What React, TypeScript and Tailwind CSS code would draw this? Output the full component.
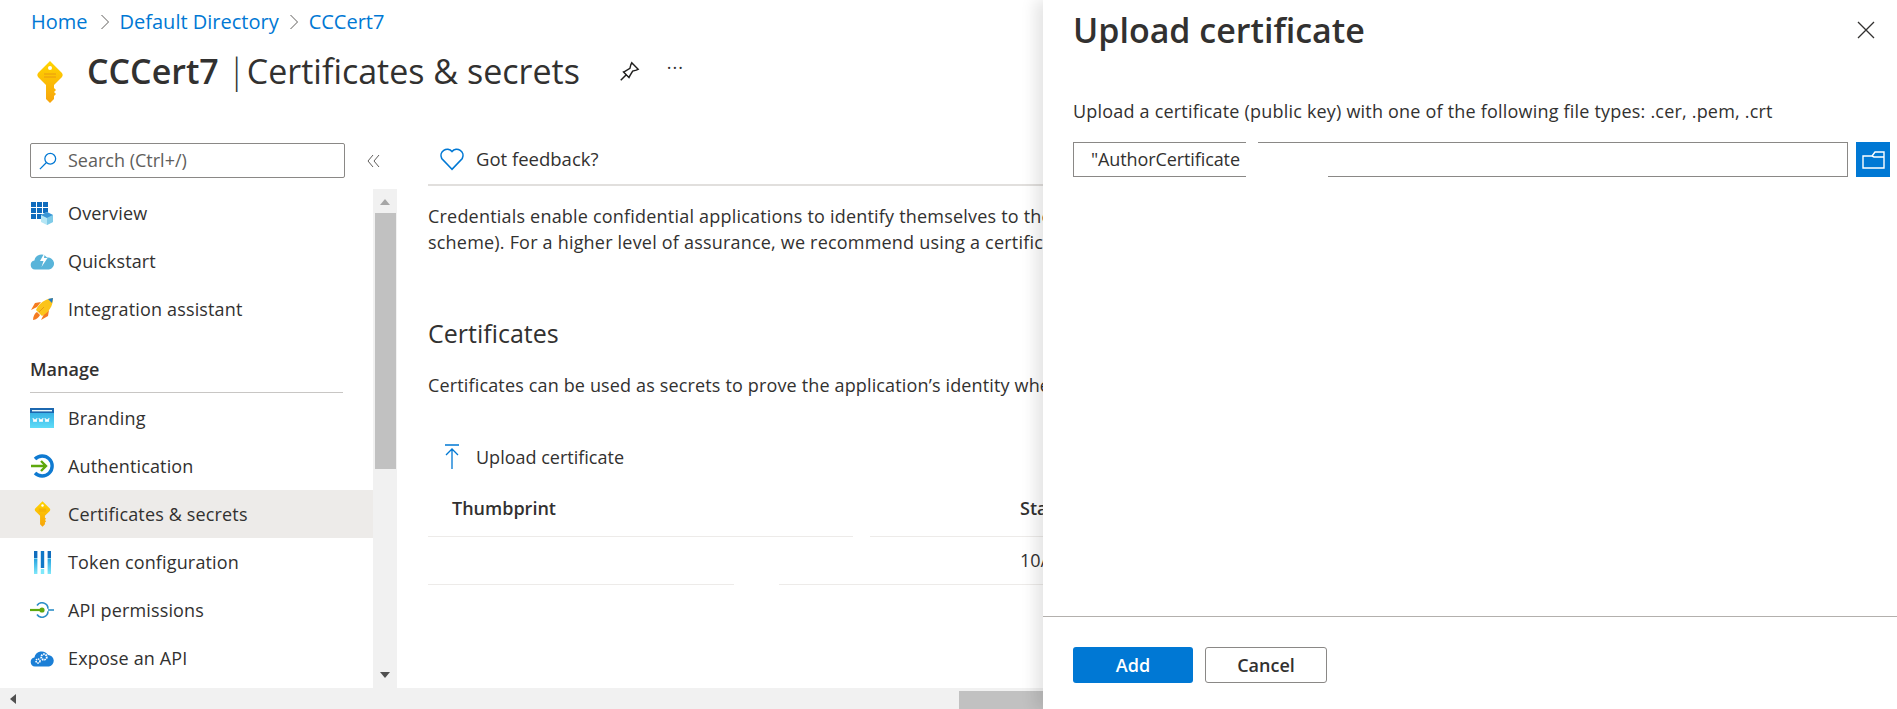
import { ReactNode } from "react";

const KeyIcon = ({ className }: { className: string }) => (
  <svg viewBox="0 0 28 42" className={className}>
    <defs>
      <linearGradient id="keyFill" x1="0" y1="0" x2="0" y2="1">
        <stop offset="0" stopColor="#ffd400" />
        <stop offset="1" stopColor="#f7a40c" />
      </linearGradient>
    </defs>
    <path d="M14 0 L26 12 Q27.5 14 26 16 L18 24 V27 L20 29 L18 31 L20 33 L18 35 V38 L14 42 L10 38 V24 L2 16 Q.5 14 2 12 Z" fill="url(#keyFill)" />
    <circle cx="14" cy="7" r="2" fill="#fff" />
    <path d="M8 13h12M8 16h12" stroke="#e89a10" strokeWidth="1" />
  </svg>
);

const OverviewIcon = () => (
  <svg viewBox="0 0 24 24" className="w-6 h-6">
    <path d="M1 1h5v5H1zM7 1h5v5H7zM13 1h5v5h-5zM1 7h5v5H1zM7 7h5v5H7zM13 7h5v5h-5zM1 13h5v5H1zM7 13h5v5H7z" fill="#0f6cbd" />
    <path d="M17 11l6 3v7l-6 3-6-3v-7z" fill="#b5e6f5" />
    <path d="M17 17l6-3v7l-6 3z" fill="#7fcbe8" />
    <path d="M17 11l6 3-6 3-6-3z" fill="#3a96d6" />
  </svg>
);

const QuickstartIcon = () => (
  <svg viewBox="0 0 24 18" className="w-6 h-[18px]">
    <path d="M5 17.5a4.6 4.6 0 0 1-.6-9.1A7 7 0 0 1 17 5.6a5.8 5.8 0 0 1 2 11.9z" fill="#59b4d9" />
    <path d="M15 0L10 9h3.5l-2 6 6-9H14z" fill="#fff" />
  </svg>
);

const RocketIcon = () => (
  <svg viewBox="0 0 24 24" className="w-6 h-6">
    <path d="M7 10L1 13l4-7 6-1zM14 17l-3 6 7-4 1-6z" fill="#f47b20" />
    <path d="M6 13C9 6 15 2 23 1c0 8-4 14-11 18z" fill="#fcc419" />
    <path d="M18 2l5-1-1 5z" fill="#1f78c8" />
    <path d="M3 23c0-4 2-7 4-8l3 3c-1 2-4 5-7 5z" fill="#f47b20" />
    <path d="M9 15l5-5" stroke="#e89a10" strokeWidth="1" />
  </svg>
);

const BrandingIcon = () => (
  <svg viewBox="0 0 24 20" className="w-6 h-5">
    <defs>
      <linearGradient id="wwwFill" x1="0" y1="0" x2="0" y2="1">
        <stop offset="0" stopColor="#2aa5e0" />
        <stop offset="1" stopColor="#5fdcf7" />
      </linearGradient>
    </defs>
    <rect width="24" height="20" fill="url(#wwwFill)" />
    <rect width="24" height="5" fill="#1c68b0" />
    <rect x="2" y="2" width="20" height="1.4" fill="#e6f5fb" />
    <path d="M3 10l1 4 1-3 1 3 1-4M9 10l1 4 1-3 1 3 1-4M15 10l1 4 1-3 1 3 1-4" fill="none" stroke="#fff" strokeWidth="1" />
  </svg>
);

const AuthIcon = () => (
  <svg viewBox="0 0 24 24" className="w-6 h-6">
    <path d="M5 5A10 10 0 1 1 5 19" fill="none" stroke="#0f7ad1" strokeWidth="3.4" />
    <path d="M1 12h15M11 7l5 5-5 5" fill="none" stroke="#5ea80d" strokeWidth="2.4" />
  </svg>
);

const TokenIcon = () => (
  <svg viewBox="0 0 17 23" className="w-[17px] h-[23px]">
    <defs>
      <linearGradient id="tokenFill" x1="0" y1="0" x2="0" y2="1">
        <stop offset="0" stopColor="#0f6cbd" />
        <stop offset="0.3" stopColor="#0f6cbd" />
        <stop offset="0.32" stopColor="#8fdcf5" />
        <stop offset="0.36" stopColor="#2aa5e0" />
        <stop offset="1" stopColor="#7fe8fa" />
      </linearGradient>
    </defs>
    <rect x="0" y="0" width="3.4" height="23" fill="url(#tokenFill)" />
    <rect x="6.8" y="0" width="3.4" height="17" fill="#0f78c8" />
    <rect x="6.8" y="18" width="3.4" height="5" fill="#7fe8fa" />
    <rect x="13.6" y="0" width="3.4" height="23" fill="url(#tokenFill)" />
  </svg>
);

const ApiIcon = () => (
  <svg viewBox="0 0 24 16" className="w-6 h-4">
    <path d="M7 3.5a6 6 0 0 1 11 3.2M7 12.5a6 6 0 0 0 11-3.2" fill="none" stroke="#2d8fc7" strokeWidth="1.6" />
    <path d="M18 8h6" stroke="#2d8fc7" strokeWidth="1.6" />
    <path d="M0 8h11" stroke="#5ea80d" strokeWidth="2.2" />
    <circle cx="12" cy="8" r="2.6" fill="#5ea80d" />
  </svg>
);

const ExposeIcon = () => (
  <svg viewBox="0 0 24 18" className="w-6 h-[18px]">
    <path d="M5 17.5a4.6 4.6 0 0 1-.6-9.1A7.4 7.4 0 0 1 18 6a5.8 5.8 0 0 1 1 11.5z" fill="#1b7fd6" />
    <circle cx="8" cy="12" r="2" fill="none" stroke="#fff" strokeWidth="1.6" strokeDasharray="1.4 .7" />
    <circle cx="14" cy="8" r="2.8" fill="none" stroke="#fff" strokeWidth="1.8" strokeDasharray="1.6 .8" />
  </svg>
);

const NavItem = ({ icon, label, active }: { icon: ReactNode; label: string; active?: boolean }) => (
  <div className={`flex items-center h-12 pl-[30px] text-[18px] tracking-[0.15px] ${active ? "bg-[#edebe9]" : ""}`}>
    <span className="w-6 flex justify-center shrink-0">{icon}</span>
    <span className="ml-[14px] whitespace-nowrap">{label}</span>
  </div>
);

const Chevron = () => (
  <svg viewBox="0 0 10 18" className="w-[10px] h-[18px] mx-[10px]">
    <path d="M1.5 2l7 7-7 7" fill="none" stroke="#605e5c" strokeWidth="1" />
  </svg>
);

export default function App() {
  return (
    <div className="relative w-[1897px] h-[709px] overflow-hidden bg-white text-[#323130] font-['Open_Sans',sans-serif]">
      <div className="flex flex-col w-full h-full">
        <div className="flex items-center h-11 pl-[31px] text-[20px] text-[#0078d4]">
          <span className="mr-[2px]">Home</span>
          <Chevron />
          <span>Default Directory</span>
          <Chevron />
          <span>CCCert7</span>
        </div>

        <div className="flex items-center h-[55px] pl-[36px]">
          <KeyIcon className="w-[28px] h-[42px] mt-[20px]" />
          <div className="flex items-center ml-[23px] text-[34px] leading-[46px] mb-[2px] whitespace-nowrap">
            <span className="font-semibold">CCCert7</span>
            <span className="w-[20px] ml-[8px] text-center font-light">|</span>
            <span>Certificates &amp; secrets</span>
          </div>
          <svg viewBox="0 0 24 24" className="w-[22px] h-[22px] ml-[38px]">
            <path d="M15 2l7 7-2 1-4 1-3 5-1 2-3-3-6 6 6-6-3-3 2-1 5-3 1-4z" fill="none" stroke="#201f1e" strokeWidth="1.6" />
          </svg>
          <span className="ml-[27px] mb-2 text-[18px] tracking-[1px]">···</span>
        </div>

        <div className="flex flex-1 min-h-0 mt-[44px]">
          <aside className="w-[397px] shrink-0 flex flex-col">
            <div className="flex items-center h-[35px] pl-[30px]">
              <div className="flex items-center w-[315px] h-[35px] border border-[#8a8886] rounded-[2px] pl-[8px]">
                <svg viewBox="0 0 20 20" className="w-[18px] h-[18px]">
                  <circle cx="12.5" cy="7.5" r="6" fill="none" stroke="#0078d4" strokeWidth="1.4" />
                  <path d="M8 12l-7 7" stroke="#0078d4" strokeWidth="1.4" />
                </svg>
                <span className="ml-[11px] text-[18px] text-[#605e5c]">Search (Ctrl+/)</span>
              </div>
              <svg viewBox="0 0 14 14" className="w-[14px] h-[14px] ml-[22px]">
                <path d="M6 1L1 7l5 6M12 1L7 7l5 6" fill="none" stroke="#605e5c" strokeWidth="1" />
              </svg>
            </div>
            <div className="flex flex-1 min-h-0 mt-[11px]">
              <div className="w-[373px] shrink-0 overflow-hidden">
                <NavItem icon={<OverviewIcon />} label="Overview" />
                <NavItem icon={<QuickstartIcon />} label="Quickstart" />
                <NavItem icon={<RocketIcon />} label="Integration assistant" />
                <div className="mx-[30px] h-[60px] flex items-end border-b border-[#c8c6c4] pb-[9px] mb-[1px] text-[18px] font-semibold">Manage</div>
                <NavItem icon={<BrandingIcon />} label="Branding" />
                <NavItem icon={<AuthIcon />} label="Authentication" />
                <NavItem icon={<KeyIcon className="w-[17px] h-[26px]" />} label="Certificates & secrets" active />
                <NavItem icon={<TokenIcon />} label="Token configuration" />
                <NavItem icon={<ApiIcon />} label="API permissions" />
                <NavItem icon={<ExposeIcon />} label="Expose an API" />
              </div>
              <div className="w-[24px] shrink-0 bg-[#f1f1f1] flex flex-col items-center">
                <svg viewBox="0 0 12 8" className="w-3 h-2 mt-[9px]"><path d="M6 1l5 6H1z" fill="#a6a6a6" /></svg>
                <div className="w-[21px] h-[256px] bg-[#c1c1c1] mt-[7px]" />
                <svg viewBox="0 0 12 8" className="w-3 h-2 mt-auto mb-[9px]"><path d="M1 1h10L6 7z" fill="#505050" /></svg>
              </div>
            </div>
          </aside>

          <main className="flex-1 min-w-0 pl-[31px] overflow-hidden whitespace-nowrap text-[18px]">
            <div className="flex items-center h-[43px] pb-[9px] border-b-2 border-[#e1dfdd]">
              <svg viewBox="0 0 24 22" className="w-[26px] h-[24px] ml-[11px]">
                <path d="M12 20.5L2.5 10.5A5.8 5.8 0 0 1 12 4a5.8 5.8 0 0 1 9.5 6.5z" fill="none" stroke="#0078d4" strokeWidth="1.5" />
              </svg>
              <span className="ml-[11px] text-[18.5px]">Got feedback?</span>
            </div>
            <p className="mt-[17px] leading-[26px] tracking-[0.2px]">
              Credentials enable confidential applications to identify themselves to the authentication service when receiving tokens
              <br />
              scheme). For a higher level of assurance, we recommend using a certificate (instead of a client secret) as a credential.
            </p>
            <h2 className="mt-[61px] text-[25px] leading-[34px]">Certificates</h2>
            <p className="mt-[22px] leading-[26px] tracking-[0.15px]">Certificates can be used as secrets to prove the application’s identity when requesting a token.</p>
            <div className="flex items-center h-[48px] mt-[35px]">
              <svg viewBox="0 0 16 26" className="w-4 h-[26px] ml-[16px]">
                <path d="M1 1h14M8 25V5M2 11l6-6 6 6" fill="none" stroke="#0078d4" strokeWidth="1.3" />
              </svg>
              <span className="ml-[16px]">Upload certificate</span>
            </div>
            <div className="relative flex items-center h-[56px] border-b border-[#edebe9] font-semibold">
              <span className="ml-[24px]">Thumbprint</span>
              <span className="absolute left-[592px]">Start date</span>
              <span className="absolute left-[425px] -bottom-px w-[17px] h-px bg-white" />
            </div>
            <div className="relative flex items-center h-[48px] border-b border-[#edebe9]">
              <span className="absolute left-[592px]">10/21/2021</span>
              <span className="absolute left-[306px] -bottom-px w-[45px] h-px bg-white" />
            </div>
          </main>
        </div>

        <div className="flex items-center h-[21px] bg-[#f1f1f1]">
          <svg viewBox="0 0 8 12" className="w-2 h-3 ml-[9px]"><path d="M7 1v10L1 6z" fill="#505050" /></svg>
          <div className="w-[90px] h-[18px] bg-[#c1c1c1] ml-[942px] mt-[2px]" />
        </div>
      </div>

      <div className="absolute top-0 right-0 bottom-0 w-[854px] flex flex-col bg-white shadow-[-8px_0_14px_rgba(0,0,0,0.1)]">
        <div className="flex items-center justify-between h-[60px] pl-[30px] pr-[22px]">
          <h1 className="text-[34px] font-semibold">Upload certificate</h1>
          <svg viewBox="0 0 18 18" className="w-[18px] h-[18px]"><path d="M1 1l16 16M17 1L1 17" stroke="#323130" strokeWidth="1.3" /></svg>
        </div>
        <div className="flex-1 pl-[30px] pr-[7px] pt-[38px]">
          <p className="text-[18px] tracking-[0.2px] leading-[26px]">Upload a certificate (public key) with one of the following file types: .cer, .pem, .crt</p>
          <div className="flex mt-[18px] h-[35px]">
            <div className="relative flex-1 flex items-center border border-[#8a8886] pl-[17px] text-[18px] tracking-[-0.1px]">
              "AuthorCertificate
              <span className="absolute left-[172px] -top-px w-[12px] h-[2px] bg-white" />
              <span className="absolute left-[172px] -bottom-px w-[82px] h-[2px] bg-white" />
            </div>
            <div className="ml-[8px] w-[34px] bg-[#0078d4] flex items-center justify-center">
              <svg viewBox="0 0 23 18" className="w-[23px] h-[18px]">
                <path d="M1 5h9l3-4h9v16H1zM10 5l2 1h10" fill="none" stroke="#fff" strokeWidth="1.4" />
              </svg>
            </div>
          </div>
        </div>
        <div className="flex items-start h-[93px] border-t border-[#b3b0ad] pl-[30px] pt-[30px]">
          <button className="w-[120px] h-[36px] rounded-[3px] bg-[#0078d4] text-white text-[18px] font-semibold">Add</button>
          <button className="w-[122px] h-[36px] ml-[12px] rounded-[3px] border border-[#8a8886] bg-white text-[18px] font-semibold">Cancel</button>
        </div>
      </div>
    </div>
  );
}
